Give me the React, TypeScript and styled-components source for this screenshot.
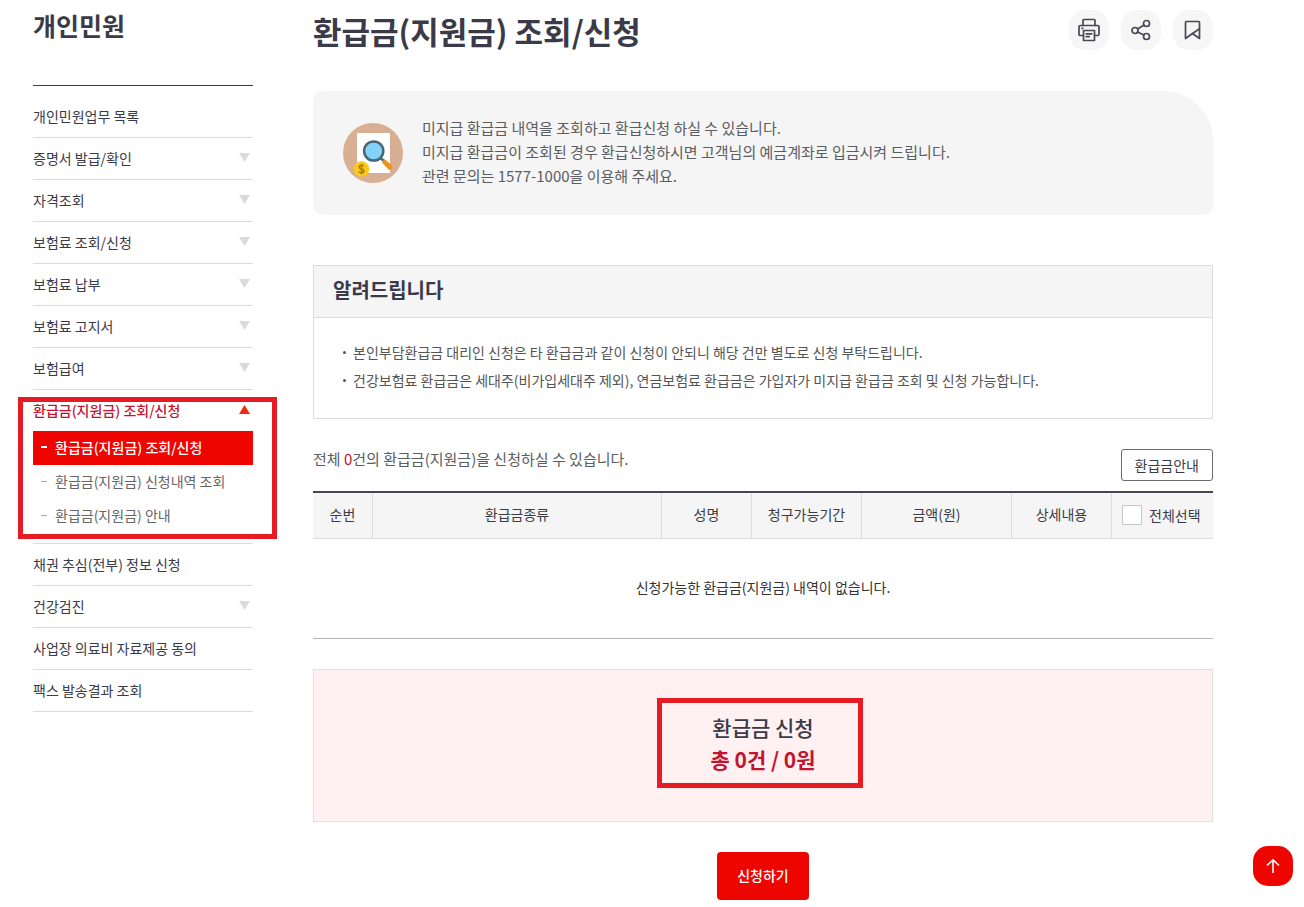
import React from 'react';
import styled, { createGlobalStyle, css } from 'styled-components';

const ink = '#3a3a48';
const line = '#dcdcdc';
const red = '#ee0500';
const crimson = '#c4122f';
const frameRed = '#e61c24';

const GlobalStyle = createGlobalStyle`
  *, *::before, *::after { box-sizing: border-box; }
  body {
    margin: 0;
    background: #fff;
    color: ${ink};
    font: 400 14px/24px "Noto Sans CJK KR", "Noto Sans", sans-serif;
  }
  h1, h2, p, ul { margin: 0; padding: 0; }
  ul { list-style: none; }
  a { color: inherit; text-decoration: none; }
  button { font: inherit; cursor: pointer; }
`;

const Page = styled.div`
  display: grid;
  grid-template-columns: 220px minmax(0, 1fr);
  column-gap: 60px;
  align-items: start;
  padding: 0 91px 7px 33px;
`;

const SideTitle = styled.h2`
  padding: 5px 0 40px;
  border-bottom: 1px solid ${ink};
  font-size: 25px;
  line-height: 40px;
  font-weight: 700;
`;

const Menu = styled.ul`
  padding-top: 10px;
`;

const MenuItem = styled.li`
  position: relative;
  border-bottom: 1px solid ${line};
`;

const MenuLink = styled.a<{ $active?: boolean }>`
  display: flex;
  align-items: center;
  justify-content: space-between;
  height: 41px;
  padding: 0 3px 2px 0;
  ${p => p.$active && css`color: ${crimson}; font-weight: 500;`}
`;

const Caret = styled.svg<{ $up?: boolean }>`
  width: 11px;
  height: 9px;
  fill: ${p => (p.$up ? '#f02a12' : '#dadada')};
  ${p => p.$up && css`transform: rotate(180deg);`}
`;

const SubMenu = styled.ul`
  padding-bottom: 10px;
`;

const SubLink = styled.a<{ $active?: boolean }>`
  display: flex;
  align-items: center;
  gap: 8px;
  height: 34px;
  padding: 0 0 2px 8px;
  color: ${p => (p.$active ? '#fff' : '#666')};
  background: ${p => (p.$active ? red : 'transparent')};
  font-weight: ${p => (p.$active ? 500 : 400)};

  &::before {
    content: '';
    width: 6px;
    height: ${p => (p.$active ? 2 : 1)}px;
    background: ${p => (p.$active ? '#fff' : '#aaa')};
  }
`;

const MenuFrame = styled.span`
  position: absolute;
  inset: 7px -24px 4px -15px;
  border: 5px solid ${frameRed};
  pointer-events: none;
`;

const Header = styled.header`
  display: flex;
  align-items: flex-start;
  justify-content: space-between;
  padding-top: 10px;
`;

const Title = styled.h1`
  font-size: 31px;
  line-height: 42px;
  font-weight: 700;
`;

const Tools = styled.div`
  display: flex;
  gap: 12px;
`;

const ToolButton = styled.button`
  display: grid;
  place-items: center;
  width: 40px;
  height: 40px;
  padding: 0;
  border: 0;
  border-radius: 16px;
  background: #f6f6f6;

  svg {
    width: 24px;
    height: 24px;
    fill: none;
    stroke: #484857;
    stroke-width: 1.7;
    stroke-linejoin: round;
    stroke-linecap: round;
  }
`;

const Info = styled.section`
  display: flex;
  align-items: center;
  gap: 19px;
  min-height: 124px;
  margin-top: 39px;
  padding: 0 30px;
  border-radius: 10px 50px 10px 10px;
  background: #f5f5f5;
  color: #5c5c62;
  font-size: 15px;

  svg { flex: none; }
`;

const InfoText = styled.div`
  padding-bottom: 2px;
`;

const Notice = styled.section`
  margin-top: 50px;
  border: 1px solid ${line};
`;

const NoticeTitle = styled.h2`
  padding: 4px 19px 7px;
  border-bottom: 1px solid ${line};
  background: #f5f5f5;
  font-size: 20px;
  line-height: 40px;
  font-weight: 700;
`;

const NoticeList = styled.ul`
  padding: 20px 28px 24px;
  color: #555;
  line-height: 28px;

  li {
    display: flex;
    align-items: center;
    gap: 7px;
  }
  li::before {
    content: '';
    flex: none;
    width: 3px;
    height: 3px;
    margin-left: 1px;
    border-radius: 50%;
    background: #555;
  }
`;

const CountRow = styled.div`
  display: flex;
  align-items: flex-start;
  justify-content: space-between;
  margin-top: 30px;
  color: #5c5c62;
  font-size: 15px;
  line-height: 20px;

  em { color: ${crimson}; font-style: normal; }
`;

const GuideButton = styled.button`
  height: 32px;
  padding: 0 13px;
  border: 1px solid #6a6a74;
  border-radius: 3px;
  background: #fff;
  color: ${ink};
  font-size: 14px;
  line-height: 28px;
`;

const Table = styled.table`
  width: 100%;
  margin-top: 10px;
  border-top: 2px solid #484850;
  border-bottom: 1px solid #b4b4b4;
  border-spacing: 0;
  table-layout: fixed;

  th {
    height: 46px;
    padding: 0 0 4px;
    border-bottom: 1px solid ${line};
    background: #f5f5f5;
    font-weight: 400;
  }
  th + th { border-left: 1px solid ${line}; }
  th:last-child { padding-bottom: 2px; }
  td {
    height: 99px;
    padding: 0 0 4px;
    text-align: center;
    color: #333;
  }
`;

const SelectAll = styled.label`
  display: flex;
  align-items: center;
  gap: 7px;
  padding-left: 10px;

  input {
    appearance: none;
    width: 20px;
    height: 20px;
    margin: 0;
    border: 1px solid #c8c8c8;
    background: #fff;
  }
`;

const Summary = styled.section`
  display: flex;
  justify-content: center;
  margin-top: 30px;
  padding: 28px 0 33px;
  border: 1px solid #e8dcdc;
  background: #fff0f1;
`;

const Total = styled.div`
  position: relative;
  width: 200px;
  padding: 13px 0;
  text-align: center;
  font-size: 21px;
  line-height: 32px;
  font-weight: 500;

  strong { display: block; color: ${crimson}; font-weight: 700; }
`;

const TotalFrame = styled.span`
  position: absolute;
  inset: 0 0 0 -6px;
  border: 5px solid ${frameRed};
  pointer-events: none;
`;

const Actions = styled.div`
  display: flex;
  justify-content: center;
  margin-top: 30px;
`;

const ApplyButton = styled.button`
  height: 48px;
  padding: 0 20px 2px;
  border: 0;
  border-radius: 4px;
  background: ${red};
  color: #fff;
  font-size: 14px;
  font-weight: 500;
`;

const TopButton = styled.button`
  position: fixed;
  right: 11px;
  bottom: 21px;
  display: grid;
  place-items: center;
  width: 40px;
  height: 40px;
  padding: 0;
  border: 0;
  border-radius: 15px;
  background: ${red};
`;

type Entry = { label: string; more?: boolean; children?: string[] };

const menu: Entry[] = [
  { label: '개인민원업무 목록' },
  { label: '증명서 발급/확인', more: true },
  { label: '자격조회', more: true },
  { label: '보험료 조회/신청', more: true },
  { label: '보험료 납부', more: true },
  { label: '보험료 고지서', more: true },
  { label: '보험급여', more: true },
  {
    label: '환급금(지원금) 조회/신청',
    more: true,
    children: ['환급금(지원금) 조회/신청', '환급금(지원금) 신청내역 조회', '환급금(지원금) 안내'],
  },
  { label: '채권 추심(전부) 정보 신청' },
  { label: '건강검진', more: true },
  { label: '사업장 의료비 자료제공 동의' },
  { label: '팩스 발송결과 조회' },
];

const columns: { label: string; width?: number }[] = [
  { label: '순번', width: 59 },
  { label: '환급금종류' },
  { label: '성명', width: 90 },
  { label: '청구가능기간', width: 110 },
  { label: '금액(원)', width: 150 },
  { label: '상세내용', width: 100 },
];

const PrintIcon = () => (
  <svg viewBox="0 0 24 24" aria-hidden="true">
    <path d="M6 7.500V2.300Q6 1.500 6.800 1.500H17.200Q18 1.500 18 2.300V7.500" />
    <path d="M6.500 17.500H3.300Q2 17.500 2 16.200V8.800Q2 7.500 3.300 7.500H20.700Q22 7.500 22 8.800V16.200Q22 17.500 20.700 17.500H17.500" />
    <path d="M6.500 12.500H17.500V22.500H6.500ZM9.200 15.800H14.800M9.200 18.600H12.300M5 10.300H5.800" />
  </svg>
);

const ShareIcon = () => (
  <svg viewBox="0 0 24 24" aria-hidden="true">
    <circle cx="6" cy="12.500" r="3" />
    <circle cx="17.500" cy="5.500" r="3" />
    <circle cx="17.500" cy="18.500" r="3" />
    <path d="M8.600 10.900L15 7.100M8.600 14L15 17.100" />
  </svg>
);

const BookmarkIcon = () => (
  <svg viewBox="0 0 24 24" aria-hidden="true">
    <path d="M4.500 20.500V4.500Q4.500 3.500 5.500 3.500H17.500Q18.500 3.500 18.500 4.500V20.500L11.500 15.500Z" />
    <path d="M11.500 15.500L18.500 10.800" />
  </svg>
);

const RefundIcon = () => (
  <svg width="60" height="60" viewBox="0 0 60 60" aria-hidden="true">
    <circle cx="30" cy="30" r="30" fill="#d8af92" />
    <path d="M14 10H47V50H14Z" fill="#fff" />
    <path d="M37.500 35L41 38" stroke="#4b6578" strokeWidth="2.500" />
    <path d="M41.500 36L48 41.500Q50.500 44.500 48.500 46.500Q46.500 47.800 44.500 45.500L38.800 39.200Z" fill="#e6951f" />
    <circle cx="30.700" cy="28" r="9.600" fill="#83d3f8" stroke="#4b6578" strokeWidth="2.500" />
    <circle cx="18.500" cy="46" r="7.800" fill="#fbc91b" />
    <path
      d="M21 43.200Q19.800 42 18.200 42.200Q16 42.500 16.200 44.200Q16.300 45.600 18.500 46Q21 46.500 21 48.100Q20.800 49.800 18.500 49.800Q16.800 49.800 15.800 48.600M18.500 40.700V51.300"
      fill="none"
      stroke="#a87912"
      strokeWidth="1.400"
    />
  </svg>
);

export default function App() {
  return (
    <>
      <GlobalStyle />
      <Page>
        <nav aria-label="개인민원">
          <SideTitle>개인민원</SideTitle>
          <Menu>
            {menu.map(item => (
              <MenuItem key={item.label}>
                <MenuLink href="#" $active={!!item.children}>
                  {item.label}
                  {item.more && (
                    <Caret $up={!!item.children} viewBox="0 0 11 9" aria-hidden="true">
                      <path d="M0 0H11L5.500 9Z" />
                    </Caret>
                  )}
                </MenuLink>
                {item.children && (
                  <>
                    <SubMenu>
                      {item.children.map((label, i) => (
                        <li key={label}>
                          <SubLink href="#" $active={i === 0}>{label}</SubLink>
                        </li>
                      ))}
                    </SubMenu>
                    <MenuFrame />
                  </>
                )}
              </MenuItem>
            ))}
          </Menu>
        </nav>

        <main>
          <Header>
            <Title>환급금(지원금) 조회/신청</Title>
            <Tools>
              <ToolButton aria-label="인쇄"><PrintIcon /></ToolButton>
              <ToolButton aria-label="공유"><ShareIcon /></ToolButton>
              <ToolButton aria-label="즐겨찾기"><BookmarkIcon /></ToolButton>
            </Tools>
          </Header>

          <Info>
            <RefundIcon />
            <InfoText>
              <p>미지급 환급금 내역을 조회하고 환급신청 하실 수 있습니다.</p>
              <p>미지급 환급금이 조회된 경우 환급신청하시면 고객님의 예금계좌로 입금시켜 드립니다.</p>
              <p>관련 문의는 1577-1000을 이용해 주세요.</p>
            </InfoText>
          </Info>

          <Notice>
            <NoticeTitle>알려드립니다</NoticeTitle>
            <NoticeList>
              <li>본인부담환급금 대리인 신청은 타 환급금과 같이 신청이 안되니 해당 건만 별도로 신청 부탁드립니다.</li>
              <li>건강보험료 환급금은 세대주(비가입세대주 제외), 연금보험료 환급금은 가입자가 미지급 환급금 조회 및 신청 가능합니다.</li>
            </NoticeList>
          </Notice>

          <CountRow>
            <p>전체 <em>0</em>건의 환급금(지원금)을 신청하실 수 있습니다.</p>
            <GuideButton>환급금안내</GuideButton>
          </CountRow>

          <Table>
            <colgroup>
              {columns.map(c => <col key={c.label} width={c.width} />)}
              <col width={102} />
            </colgroup>
            <thead>
              <tr>
                {columns.map(c => <th key={c.label} scope="col">{c.label}</th>)}
                <th scope="col">
                  <SelectAll><input type="checkbox" />전체선택</SelectAll>
                </th>
              </tr>
            </thead>
            <tbody>
              <tr>
                <td colSpan={7}>신청가능한 환급금(지원금) 내역이 없습니다.</td>
              </tr>
            </tbody>
          </Table>

          <Summary>
            <Total>
              <p>환급금 신청</p>
              <strong>총 0건 / 0원</strong>
              <TotalFrame />
            </Total>
          </Summary>

          <Actions>
            <ApplyButton>신청하기</ApplyButton>
          </Actions>
        </main>
      </Page>
      <TopButton aria-label="맨 위로">
        <svg width="16" height="16" viewBox="0 0 16 16" fill="none" stroke="#fff" strokeWidth="1.600" aria-hidden="true">
          <path d="M8 15V2M2 7.500L8 1.800L14 7.500" />
        </svg>
      </TopButton>
    </>
  );
}
